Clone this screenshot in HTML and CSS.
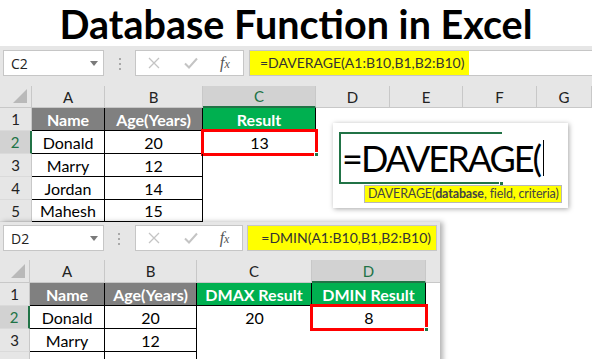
FILE: index.html
```html
<!DOCTYPE html>
<html lang="en">
<head>
    <meta charset="UTF-8">
    <meta name="viewport" content="width=device-width, initial-scale=1.0">
    <title>Database Function in Excel</title>
    <link rel="stylesheet" href="styles.css">
</head>
<body>

<h1>Database Function in Excel</h1>

<div class="sheet sheet-top">
    <div class="toolbar">
        <div class="name-box">C2<span class="caret"></span></div>
        <div class="dots"><i></i><i></i><i></i></div>
        <div class="fx-box">
            <svg class="cancel" width="12" height="12" viewBox="0 0 12 12"><path d="M1 1 L11 11 M11 1 L1 11" stroke="#c4c4c4" stroke-width="1.3" fill="none"/></svg>
            <svg class="enter" width="14" height="12" viewBox="0 0 14 12"><path d="M1 6.5 L5 10.5 L13 1.5" stroke="#c4c4c4" stroke-width="2" fill="none"/></svg>
            <span class="fx">f<span>x</span></span>
        </div>
        <div class="formula"><span class="hl">=DAVERAGE(A1:B10,B1,B2:B10)</span></div>
    </div>
    <div class="grid grid-top">
        <div class="corner"><span></span></div>
        <div class="col">A</div>
        <div class="col">B</div>
        <div class="col sel">C</div>
        <div class="col">D</div>
        <div class="col">E</div>
        <div class="col">F</div>
        <div class="col">G</div>

        <div class="row">1</div>
        <div class="cell t head">Name</div>
        <div class="cell t head">Age(Years)</div>
        <div class="cell t green">Result</div>
        <div class="cell"></div><div class="cell"></div><div class="cell"></div><div class="cell"></div>

        <div class="row sel">2</div>
        <div class="cell t">Donald</div>
        <div class="cell t">20</div>
        <div class="cell active">13<span class="handle"></span></div>
        <div class="cell"></div><div class="cell"></div><div class="cell"></div><div class="cell"></div>

        <div class="row">3</div>
        <div class="cell t">Marry</div>
        <div class="cell t">12</div>
        <div class="cell"></div><div class="cell"></div><div class="cell"></div><div class="cell"></div><div class="cell"></div>

        <div class="row">4</div>
        <div class="cell t">Jordan</div>
        <div class="cell t">14</div>
        <div class="cell"></div><div class="cell"></div><div class="cell"></div><div class="cell"></div><div class="cell"></div>

        <div class="row">5</div>
        <div class="cell t">Mahesh</div>
        <div class="cell t">15</div>
        <div class="cell"></div><div class="cell"></div><div class="cell"></div><div class="cell"></div><div class="cell"></div>
    </div>

    <div class="popup">
        <div class="edit-box">=DAVERAGE(<span class="cursor"></span><span class="handle"></span></div>
        <div class="tip">DAVERAGE(<b>database</b>, field, criteria)</div>
    </div>
</div>

<div class="sheet sheet-bottom">
    <div class="toolbar">
        <div class="name-box">D2<span class="caret"></span></div>
        <div class="dots"><i></i><i></i><i></i></div>
        <div class="fx-box">
            <svg class="cancel" width="12" height="12" viewBox="0 0 12 12"><path d="M1 1 L11 11 M11 1 L1 11" stroke="#c4c4c4" stroke-width="1.3" fill="none"/></svg>
            <svg class="enter" width="14" height="12" viewBox="0 0 14 12"><path d="M1 6.5 L5 10.5 L13 1.5" stroke="#c4c4c4" stroke-width="2" fill="none"/></svg>
            <span class="fx">f<span>x</span></span>
        </div>
        <div class="formula"><span class="hl">=DMIN(A1:B10,B1,B2:B10)</span></div>
    </div>
    <div class="grid grid-bottom">
        <div class="corner"><span></span></div>
        <div class="col">A</div>
        <div class="col">B</div>
        <div class="col">C</div>
        <div class="col sel">D</div>
        <div class="col blank"></div>

        <div class="row">1</div>
        <div class="cell t head">Name</div>
        <div class="cell t head">Age(Years)</div>
        <div class="cell t green">DMAX Result</div>
        <div class="cell t green">DMIN Result</div>
        <div class="cell"></div>

        <div class="row sel">2</div>
        <div class="cell t">Donald</div>
        <div class="cell t">20</div>
        <div class="cell">20</div>
        <div class="cell active">8<span class="handle"></span></div>
        <div class="cell"></div>

        <div class="row">3</div>
        <div class="cell t">Marry</div>
        <div class="cell t">12</div>
        <div class="cell"></div><div class="cell"></div><div class="cell"></div>

        <div class="row"></div>
        <div class="cell t"></div>
        <div class="cell t"></div>
        <div class="cell"></div><div class="cell"></div><div class="cell"></div>
    </div>
</div>

</body>
</html>
```

FILE: styles.css
```css
* {
    box-sizing: border-box;
}

body {
    margin: 0;
    width: 592px;
    height: 359px;
    overflow: hidden;
    background: #fff;
    font-family: Lato, "Liberation Sans", sans-serif;
}

h1 {
    margin: 0;
    height: 46px;
    font-size: 39.5px;
    line-height: 47px;
    font-weight: bold;
    text-align: center;
    color: #000;
}

.sheet {
    position: relative;
    background: #fff;
}

.sheet-bottom {
    width: 440px;
    box-shadow: 3px 0 5px rgba(0, 0, 0, 0.3);
}

/* formula bar */
.toolbar {
    display: flex;
    align-items: flex-start;
    height: 40px;
    padding: 4px 0 0 3px;
    background: #e6e6e6;
}

.sheet-bottom .toolbar {
    height: 38px;
    padding-top: 3px;
}

.name-box {
    width: 101px;
    height: 26px;
    padding: 0 5px 0 7px;
    display: flex;
    align-items: center;
    justify-content: space-between;
    border: 1px solid #c6c6c6;
    background: #fff;
    font-family: "Open Sans", sans-serif;
    font-size: 14px;
    color: #222;
}

.caret {
    border-left: 4px solid transparent;
    border-right: 4px solid transparent;
    border-top: 5px solid #7a7a7a;
}

.dots {
    width: 31px;
    padding-top: 8px;
    display: flex;
    flex-direction: column;
    align-items: center;
    gap: 3px;
}

.dots i {
    width: 2px;
    height: 2px;
    background: #a8a8a8;
}

.fx-box {
    width: 109px;
    height: 26px;
    display: flex;
    align-items: center;
    border: 1px solid #c6c6c6;
    background: #fff;
}

.fx-box .cancel {
    margin-left: 12px;
}

.fx-box .enter {
    margin-left: 24px;
}

.fx {
    margin-left: 22px;
    font-family: "Liberation Serif", serif;
    font-style: italic;
    font-size: 16px;
    color: #555;
}

.fx span {
    font-size: 12px;
}

.formula {
    flex: 1;
    height: 26px;
    margin-left: 5px;
    border: 1px solid #c6c6c6;
    border-right: none;
    background: #fff;
}

.sheet-bottom .formula {
    margin-left: 4px;
    margin-right: 3px;
    border-right: 1px solid #c6c6c6;
}

.hl {
    display: inline-block;
    height: 100%;
    padding: 0 5px 0 10px;
    line-height: 24px;
    background: #ffff00;
    font-size: 14px;
    color: #333;
}

.sheet-bottom .hl {
    padding-left: 13px;
}

/* grid */
.grid {
    display: grid;
}

.grid-top {
    grid-template-columns: 32px 73px 98px 113px 74px 73px 74px 1fr;
    grid-template-rows: 22px 23px 23px 23px 23px 22px;
}

.grid-bottom {
    grid-template-columns: 30px 75px 92px 115px 114px 1fr;
    grid-template-rows: 23px 23px 23px 23px 23px;
}

.corner {
    position: relative;
    background: #e6e6e6;
    border-right: 1px solid #c8c8c8;
    border-bottom: 1px solid #c8c8c8;
}

.corner span {
    position: absolute;
    right: 4px;
    bottom: 4px;
    border-left: 14px solid transparent;
    border-bottom: 14px solid #b9b9b9;
}

.col, .row {
    display: flex;
    align-items: center;
    justify-content: center;
    background: #e6e6e6;
    font-size: 15px;
    color: #222;
}

.col {
    border-right: 1px solid #c8c8c8;
    border-bottom: 1px solid #c8c8c8;
}

.col.blank {
    border-right: none;
}

.row {
    border-right: 1px solid #c8c8c8;
    border-bottom: 1px solid #dadada;
}

.col.sel {
    background: #d2d2d2;
    color: #217346;
    border-bottom: 2px solid #217346;
}

.row.sel {
    background: #d2d2d2;
    color: #217346;
    border-right: 2px solid #217346;
}

.cell {
    position: relative;
    display: flex;
    align-items: center;
    justify-content: center;
    font-size: 16px;
    color: #000;
}

.cell.t {
    border-right: 1px solid #000;
    border-bottom: 1px solid #000;
}

.cell.head {
    background: #808080;
    color: #fff;
    font-weight: bold;
}

.cell.green {
    background: #00b050;
    color: #fff;
    font-weight: bold;
}

.cell.active {
    outline: 3px solid #ff0000;
    outline-offset: -1px;
}

.handle {
    position: absolute;
    right: -3px;
    bottom: -3px;
    width: 5px;
    height: 5px;
    background: #217346;
    border: 1px solid #fff;
}

/* in-cell editing popup */
.popup {
    position: absolute;
    left: 333px;
    top: 77px;
    width: 235px;
    height: 85px;
    background: #fff;
    box-shadow: 1px 1px 5px rgba(0, 0, 0, 0.35);
}

.edit-box {
    position: absolute;
    left: 6px;
    top: 9px;
    width: 163px;
    height: 52px;
    padding-left: 1px;
    display: flex;
    align-items: center;
    border: 2px solid #217346;
    border-right: none;
    white-space: nowrap;
    font-size: 36px;
    letter-spacing: -2px;
    color: #000;
}

.cursor {
    display: inline-block;
    flex: none;
    width: 1px;
    height: 36px;
    margin-left: 3px;
    background: #000;
}

.edit-box .handle {
    right: -2px;
    bottom: -4px;
}

.tip {
    position: absolute;
    left: 31px;
    top: 62px;
    width: 198px;
    height: 18px;
    padding-left: 3px;
    border: 1px solid #b8b8b8;
    background: #ffff00;
    font-size: 12.5px;
    line-height: 16px;
    letter-spacing: -0.15px;
    color: #444;
    white-space: nowrap;
}
```
